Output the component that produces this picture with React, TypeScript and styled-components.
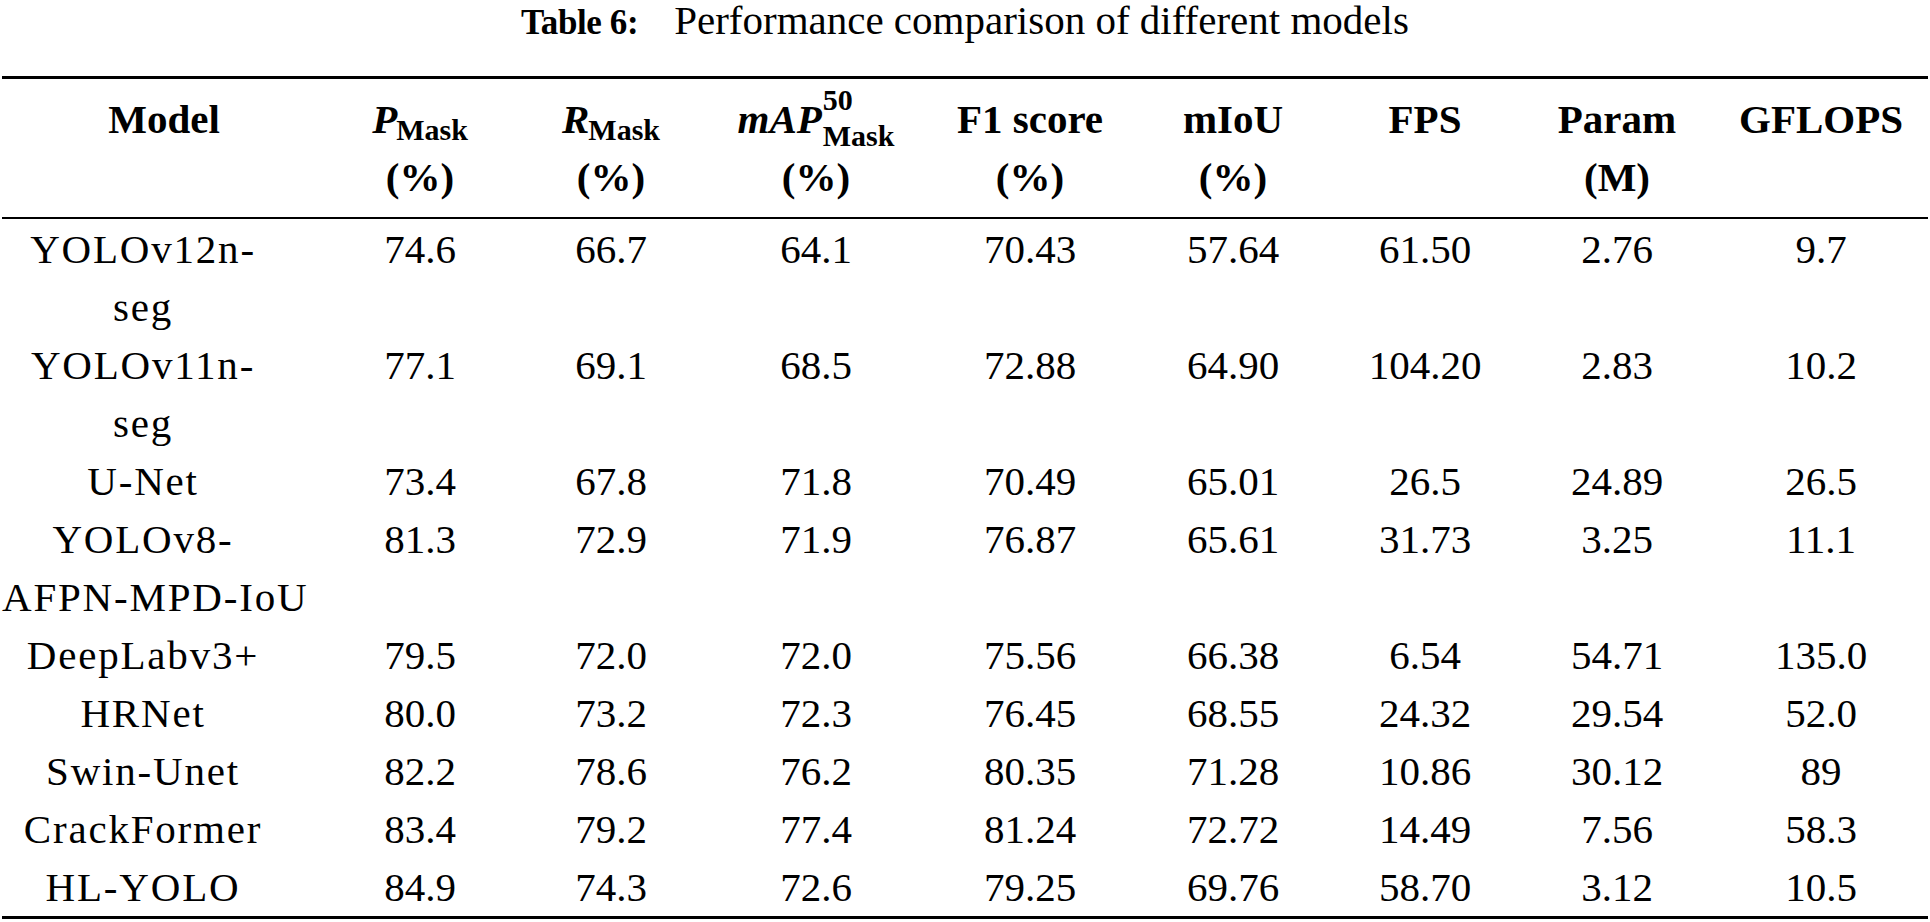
import React from 'react';
import styled, { createGlobalStyle } from 'styled-components';

const GlobalStyle = createGlobalStyle`
  html, body {
    margin: 0;
    padding: 0;
    background: #ffffff;
  }
  body {
    font-family: 'Liberation Serif', 'Times New Roman', serif;
    color: #000000;
  }
`;

const COLUMNS = '324px 188px 194px 216px 212px 194px 190px 194px 214px';

const Page = styled.div`
  width: 1930px;
  padding: 0 2px;
  box-sizing: border-box;
  font-family: 'Liberation Serif', 'Times New Roman', serif;
`;

const Caption = styled.div`
  text-align: center;
  font-size: 41px;
  line-height: 40px;
  white-space: nowrap;
  margin-bottom: 33px;
`;

const CaptionLabel = styled.span`
  font-weight: 700;
  font-size: 35px;
  letter-spacing: -0.4px;
  margin-right: 36px;
`;

const Table = styled.div`
  border-top: 3px solid #000;
  border-bottom: 3px solid #000;
  font-size: 41px;
  line-height: 58px;
`;

const Head = styled.div`
  display: grid;
  grid-template-columns: ${COLUMNS};
  padding: 11px 0;
  border-bottom: 2px solid #000;
  font-weight: 700;
`;

const Body = styled.div`
  padding-top: 1px;
`;

const Row = styled.div`
  display: grid;
  grid-template-columns: ${COLUMNS};
  align-items: start;
`;

const HeadCell = styled.div`
  text-align: center;
  white-space: nowrap;
`;

const Line = styled.div`
  height: 58px;
`;

const ModelCell = styled.div`
  text-align: center;
  padding-right: 42px;
  letter-spacing: 1.8px;
`;

const NameLine = styled.div`
  white-space: nowrap;
`;

const ValueCell = styled.div`
  text-align: center;
  white-space: nowrap;
`;

const Sym = styled.i`
  font-style: italic;
  font-weight: 700;
`;

const Sub = styled.span<{ $drop: number }>`
  font-size: 30px;
  line-height: 1;
  vertical-align: ${({ $drop }) => -$drop}px;
  margin-left: ${({ $drop }) => ($drop > 0 ? -1 : 0)}px;
`;

const Stack = styled.span`
  display: inline-flex;
  flex-direction: column;
  align-items: flex-start;
  font-size: 30px;
  line-height: 36px;
  vertical-align: 23px;
  margin: -10px 0 -8px 1px;
`;

type Row = { model: string[]; values: string[] };

const rows: Row[] = [
  { model: ['YOLOv12n-', 'seg'], values: ['74.6', '66.7', '64.1', '70.43', '57.64', '61.50', '2.76', '9.7'] },
  { model: ['YOLOv11n-', 'seg'], values: ['77.1', '69.1', '68.5', '72.88', '64.90', '104.20', '2.83', '10.2'] },
  { model: ['U-Net'], values: ['73.4', '67.8', '71.8', '70.49', '65.01', '26.5', '24.89', '26.5'] },
  { model: ['YOLOv8-', 'AFPN-MPD-IoU'], values: ['81.3', '72.9', '71.9', '76.87', '65.61', '31.73', '3.25', '11.1'] },
  { model: ['DeepLabv3+'], values: ['79.5', '72.0', '72.0', '75.56', '66.38', '6.54', '54.71', '135.0'] },
  { model: ['HRNet'], values: ['80.0', '73.2', '72.3', '76.45', '68.55', '24.32', '29.54', '52.0'] },
  { model: ['Swin-Unet'], values: ['82.2', '78.6', '76.2', '80.35', '71.28', '10.86', '30.12', '89'] },
  { model: ['CrackFormer'], values: ['83.4', '79.2', '77.4', '81.24', '72.72', '14.49', '7.56', '58.3'] },
  { model: ['HL-YOLO'], values: ['84.9', '74.3', '72.6', '79.25', '69.76', '58.70', '3.12', '10.5'] },
];

const headers: { top: React.ReactNode; unit?: string }[] = [
  { top: 'Model' },
  {
    top: (
      <>
        <Sym>P</Sym>
        <Sub $drop={7}>Mask</Sub>
      </>
    ),
    unit: '(%)',
  },
  {
    top: (
      <>
        <Sym>R</Sym>
        <Sub $drop={7}>Mask</Sub>
      </>
    ),
    unit: '(%)',
  },
  {
    top: (
      <>
        <Sym>mAP</Sym>
        <Stack>
          <span>50</span>
          <span>Mask</span>
        </Stack>
      </>
    ),
    unit: '(%)',
  },
  { top: 'F1 score', unit: '(%)' },
  { top: 'mIoU', unit: '(%)' },
  { top: 'FPS' },
  { top: 'Param', unit: '(M)' },
  { top: 'GFLOPS' },
];

export default function App() {
  return (
    <Page>
      <GlobalStyle />
      <Caption>
        <CaptionLabel>Table 6:</CaptionLabel>
        Performance comparison of different models
      </Caption>
      <Table>
        <Head>
          {headers.map((h, i) => (
            <HeadCell key={i}>
              <Line>{h.top}</Line>
              <Line>{h.unit ?? ''}</Line>
            </HeadCell>
          ))}
        </Head>
        <Body>
          {rows.map((r) => (
            <Row key={r.model.join('')}>
              <ModelCell>
                {r.model.map((l) => (
                  <NameLine key={l}>{l}</NameLine>
                ))}
              </ModelCell>
              {r.values.map((v, i) => (
                <ValueCell key={i}>{v}</ValueCell>
              ))}
            </Row>
          ))}
        </Body>
      </Table>
    </Page>
  );
}
